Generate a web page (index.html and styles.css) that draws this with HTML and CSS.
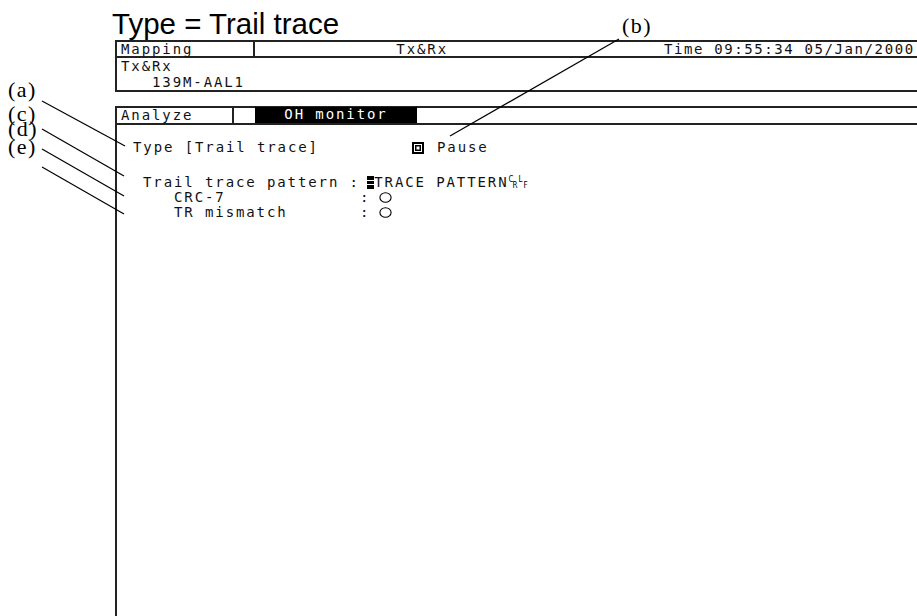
FILE: index.html
```html
<!DOCTYPE html>
<html>
<head>
<meta charset="utf-8">
<title>Type = Trail trace</title>
<link rel="stylesheet" href="styles.css">
</head>
<body>
<div class="page">
  <div class="title">Type = Trail trace</div>

  <div class="hdr mono">
    <div class="hrow">
      <div class="c-map">Mapping</div>
      <div class="c-txrx">Tx&amp;Rx</div>
      <div class="c-time">Time 09:55:34 05/Jan/2000</div>
    </div>
    <div class="hrow2">
      <div class="ln">Tx&amp;Rx</div>
      <div class="ln">   139M-AAL1</div>
    </div>
  </div>

  <div class="main mono">
    <div class="tabs">
      <div class="tab t-analyze">Analyze</div>
      <div class="tab t-blank"></div>
      <div class="tab t-oh">OH monitor</div>
    </div>
    <div class="content">
      <div class="typeline">
        <span class="tt">Type [Trail trace]</span>
        <svg class="pause-ic" width="12" height="12" viewBox="0 0 12 12"><rect x="1" y="1" width="10" height="10" fill="none" stroke="#000" stroke-width="2"/><rect x="3.75" y="3.75" width="4.5" height="4.5" fill="none" stroke="#000" stroke-width="1.5"/></svg>
        <span class="pause">Pause</span>
      </div>
      <div class="fields">
        <div class="frow">Trail trace pattern : <span class="cursor"></span>TRACE PATTERN<span class="ctl"><span class="c1">C</span><span class="c2">R</span></span><span class="ctl"><span class="c1">L</span><span class="c2">F</span></span></div>
        <div class="frow">   CRC-7             : <svg class="led" width="13" height="11" viewBox="0 0 13 11"><ellipse cx="6.5" cy="5.5" rx="5.6" ry="4.8" fill="none" stroke="#000" stroke-width="1.1"/></svg></div>
        <div class="frow">   TR mismatch       : <svg class="led" width="13" height="11" viewBox="0 0 13 11"><ellipse cx="6.5" cy="5.5" rx="5.6" ry="4.8" fill="none" stroke="#000" stroke-width="1.1"/></svg></div>
      </div>
    </div>
  </div>

  <svg class="leaders" width="917" height="616" viewBox="0 0 917 616">
    <line x1="42" y1="101" x2="125" y2="146" />
    <line x1="42" y1="129" x2="124" y2="176" />
    <line x1="42" y1="149" x2="124" y2="196" />
    <line x1="42" y1="167" x2="124" y2="214" />
    <line x1="619" y1="39" x2="450" y2="136" />
  </svg>
  <div class="lbl l-a">(a)</div>
  <div class="lbl l-b">(b)</div>
  <div class="lbl l-c">(c)</div>
  <div class="lbl l-d">(d)</div>
  <div class="lbl l-e">(e)</div>
</div>
</body>
</html>
```

FILE: styles.css
```css
html, body {
  margin: 0;
  padding: 0;
  background: #fff;
}

.page {
  position: relative;
  width: 917px;
  height: 616px;
  overflow: hidden;
  color: #000;
}

.mono {
  font-family: "DejaVu Sans Mono", "Liberation Mono", monospace;
  font-size: 14px;
  letter-spacing: 1.9px;
  color: #111;
}

.title {
  font-family: "Liberation Sans", Arial, sans-serif;
  font-size: 29.5px;
  line-height: 32px;
  height: 40px;
  padding-top: 8px;
  padding-left: 112px;
  box-sizing: border-box;
  white-space: nowrap;
}

/* header box */
.hdr {
  margin-left: 115px;
  width: 820px;
  border-top: 2px solid #222;
  border-left: 2px solid #222;
  border-bottom: 2px solid #222;
}

.hrow {
  display: flex;
  height: 14px;
  line-height: 14px;
  border-bottom: 2px solid #222;
  white-space: nowrap;
}

.c-map {
  width: 132px;
  padding-left: 4px;
  border-right: 2px solid #222;
  flex: none;
}

.c-txrx {
  width: 193px;
  text-align: right;
  flex: none;
}

.c-time {
  margin-left: 215px;
  padding-left: 1px;
  letter-spacing: 1.6px;
  flex: none;
}

.hrow2 {
  height: 32px;
  line-height: 16px;
  padding-left: 4px;
}

.ln {
  white-space: pre;
}

/* main box */
.main {
  margin-top: 14px;
  margin-left: 115px;
  width: 820px;
  height: 540px;
  border-top: 2px solid #222;
  border-left: 2px solid #222;
}

.tabs {
  display: flex;
  height: 15px;
  line-height: 15px;
  border-bottom: 2px solid #222;
  white-space: nowrap;
}

.t-analyze {
  width: 111px;
  padding-left: 4px;
  border-right: 2px solid #222;
  flex: none;
}

.t-blank {
  width: 21px;
  flex: none;
}

.t-oh {
  width: 162px;
  margin-top: -1px;
  height: 16px;
  background: #000;
  color: #fff;
  text-align: center;
  flex: none;
}

.content {
  padding-top: 15px;
  line-height: 15px;
}

.typeline {
  display: flex;
  align-items: flex-start;
  padding-left: 16px;
  height: 15px;
  white-space: nowrap;
}

.tt {
  width: 279px;
  flex: none;
}

.pause-ic {
  margin-top: 2px;
  flex: none;
}

.pause {
  margin-left: 13px;
}

.fields {
  margin-top: 20px;
  padding-left: 26px;
}

.frow {
  height: 15px;
  line-height: 15px;
  white-space: pre;
}

.cursor {
  display: inline-block;
  width: 7px;
  height: 13px;
  margin-left: -3px;
  vertical-align: -2px;
  background: linear-gradient(#000 0 4px, #fff 4px 5px, #000 5px 8px, #fff 8px 9px, #000 9px 13px);
}

/* control-picture glyphs (CR, LF) */
.ctl {
  display: inline-flex;
  flex-direction: column;
  width: 9px;
  height: 12px;
  margin-top: 2px;
  margin-right: 1px;
  vertical-align: top;
  font-family: "DejaVu Sans Condensed", "DejaVu Sans", sans-serif;
  font-size: 8px;
  line-height: 6px;
  letter-spacing: 0;
  color: #000;
}

.ctl .c1 {
  align-self: flex-start;
}

.ctl .c2 {
  align-self: flex-end;
}

.led {
  margin-left: -2px;
  vertical-align: -1px;
}

/* annotation overlay */
.leaders {
  position: absolute;
  left: 0;
  top: 0;
  pointer-events: none;
}

.leaders line {
  stroke: #000;
  stroke-width: 1.2;
}

.lbl {
  position: absolute;
  font-family: "Liberation Serif", "Times New Roman", serif;
  font-size: 22px;
  line-height: 22px;
  letter-spacing: 1.5px;
  white-space: nowrap;
}

.l-a { left: 8px; top: 79px; }
.l-c { left: 8px; top: 103px; }
.l-d { left: 8px; top: 118px; }
.l-e { left: 8px; top: 136px; }
.l-b { left: 622px; top: 15px; }
```
